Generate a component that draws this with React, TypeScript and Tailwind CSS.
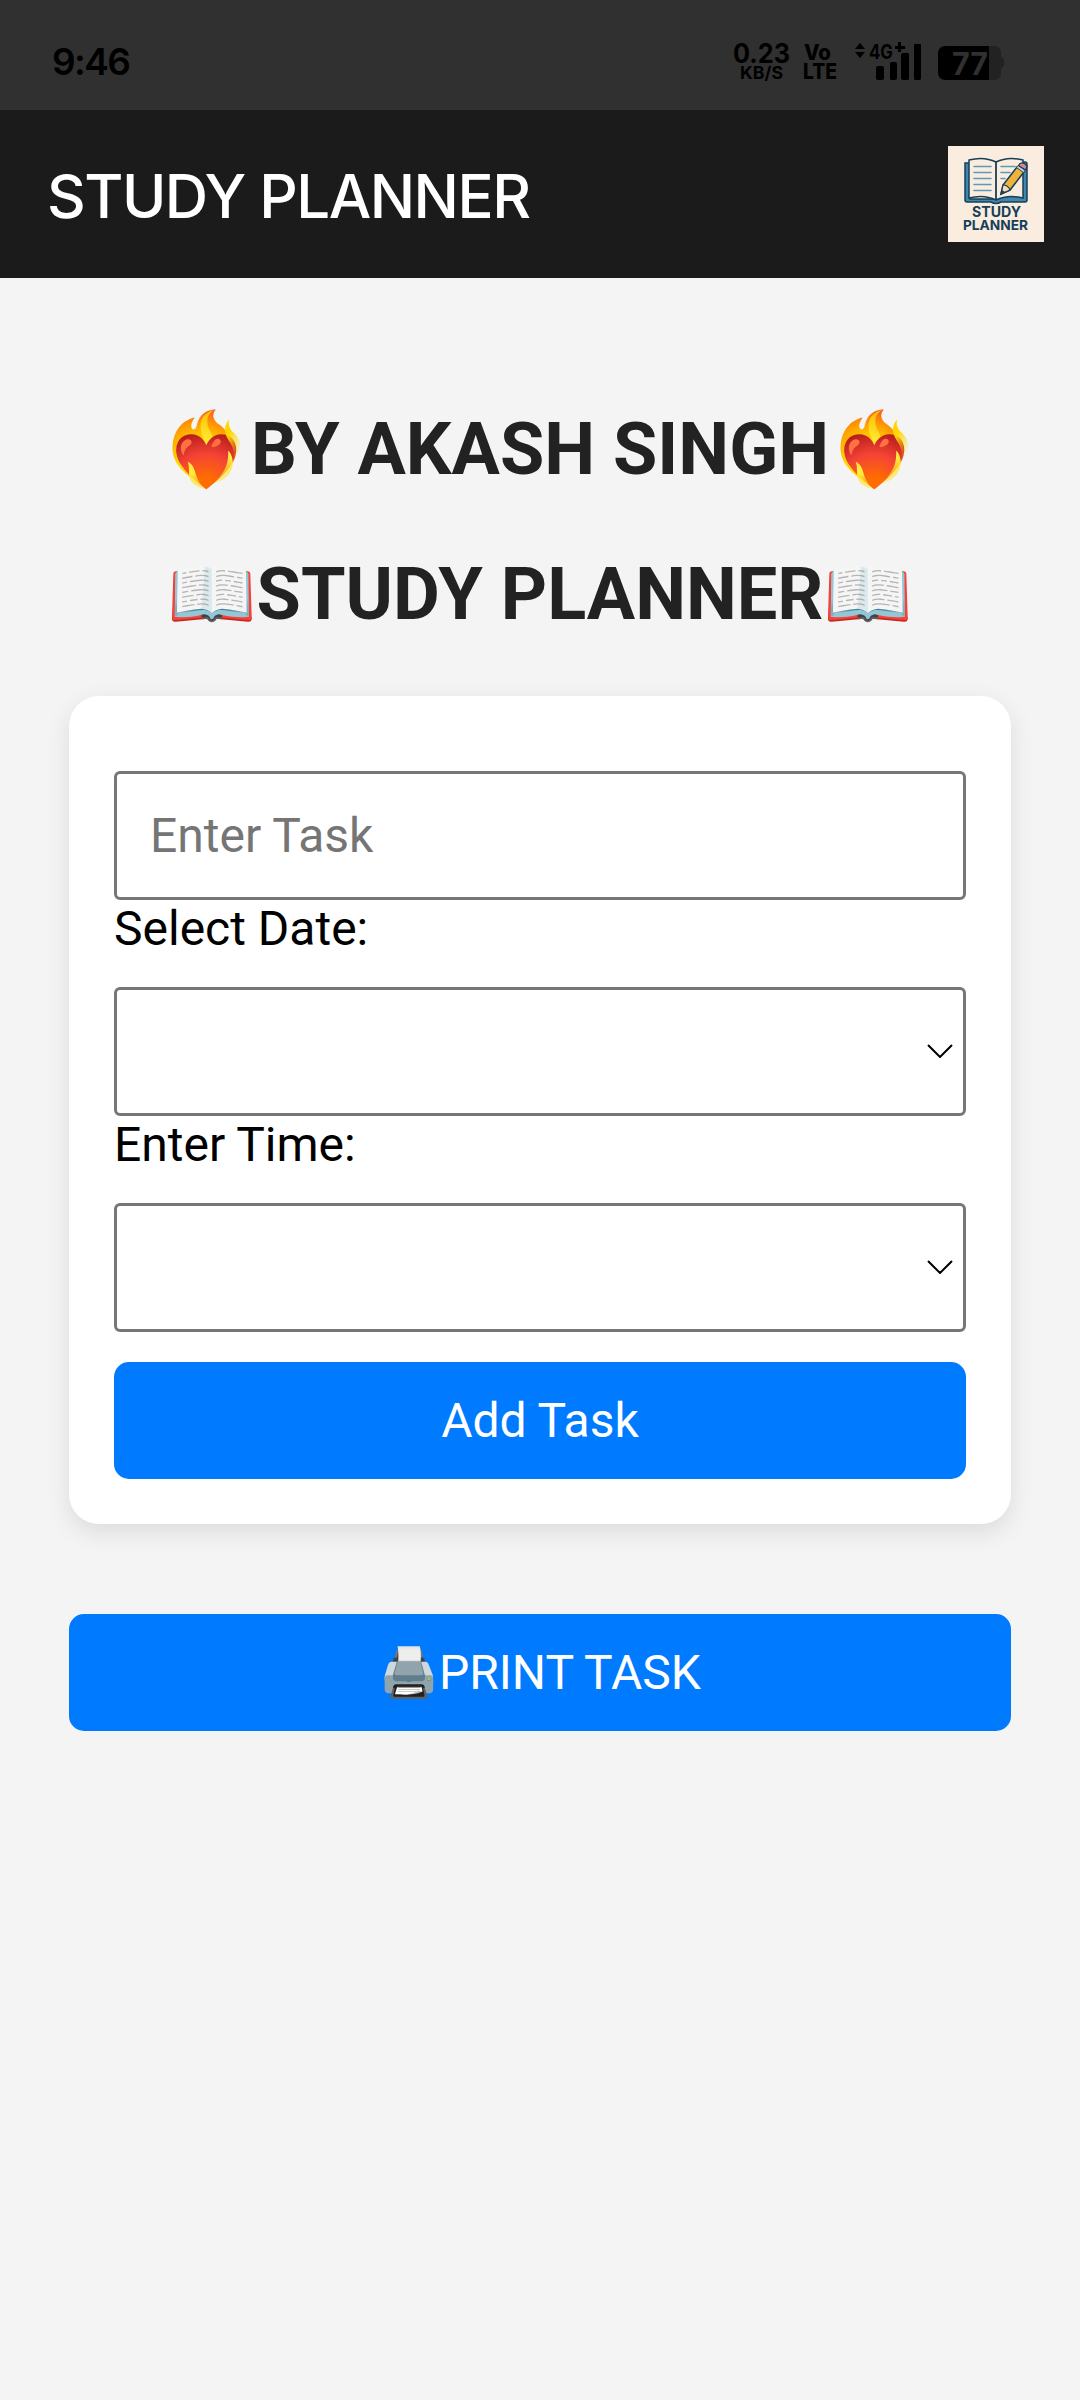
import React from "react";

const field =
  "h-[129px] w-full rounded-[6px] border-[3px] border-[#767676] bg-white";
const primary =
  "flex h-[117px] w-full items-center justify-center rounded-[15px] bg-[#007bff] text-[48px] leading-[56px] text-white";

function StatusBar() {
  return (
    <div className="flex h-[110px] items-start justify-between bg-[#303030] font-['Inter'] text-black">
      <div className="ml-[52px] mt-[40px] text-[37px] leading-[44px] font-semibold tracking-[-1.6px]">9:46</div>
      <div className="mr-[74px] mt-[42px] flex">
        <svg className="overflow-visible font-bold" width="56" height="40" viewBox="0 0 56 40">
          <text x="-2" y="21" fontSize="27" textLength="57" lengthAdjust="spacingAndGlyphs">0.23</text>
          <text x="5" y="37" fontSize="17.500" textLength="43" lengthAdjust="spacingAndGlyphs">KB/S</text>
        </svg>
        <svg className="ml-[14px] overflow-visible font-extrabold" width="34" height="40" viewBox="0 0 34 40">
          <text x="-1" y="18" fontSize="21" textLength="27" lengthAdjust="spacingAndGlyphs">Vo</text>
          <text x="-2" y="37" fontSize="21" textLength="34" lengthAdjust="spacingAndGlyphs">LTE</text>
        </svg>
        <svg className="ml-[16px] overflow-visible" width="68" height="40" viewBox="0 0 68 40">
          <path d="M0 7 5 1l5 6zM0 10h10L5 16z" />
          <path d="M23 24h4q2 0 2 2v10q0 2-2 2h-4q-2 0-2-2V26q0-2 2-2zM36 20h4q2 0 2 2v14q0 2-2 2h-4q-1 0-1-2V22q0-2 1-2zM48 11h5q1 0 1 2v23q0 2-1 2h-5q-2 0-2-2V13q0-2 2-2zM60 2h5q1 0 1 1v33q0 2-1 2h-5q-1 0-1-2V3q0-1 1-1z" />
          <text x="14" y="16.500" fontSize="20" fontWeight="700" textLength="24" lengthAdjust="spacingAndGlyphs">4G</text>
          <path d="M40 4h3V0h3v4h4v3h-4v3h-3V7h-3z" />
        </svg>
        <svg className="ml-[15px] overflow-visible" width="68" height="40" viewBox="0 0 68 40">
          <path d="M51 4h5q7 0 7 7v4q3 1 3 4v3q0 3-3 4v5q0 7-7 7h-5z" fill="#222" />
          <path d="M51 4H8Q0 4 0 12v18q0 8 8 8h43z" />
          <text x="14" y="32.500" fontSize="31" fontWeight="700" fill="#303030" textLength="36" lengthAdjust="spacingAndGlyphs">77</text>
        </svg>
      </div>
    </div>
  );
}

function Logo() {
  return (
    <svg width="96" height="96" viewBox="0 0 96 96" className="font-['Inter']">
      <rect width="96" height="96" fill="#faeddf" />
      <path d="M17 17h5v36h26V17h26v-1h3q2 0 2 2v36q0 2-2 2H53q-5 3-10 0H19q-2 0-2-2z" fill="#4087ad" stroke="#173f57" strokeWidth="1.500" />
      <path d="M21 14q15-4 27 2 12-6 27-2v38q-15-4-27 2-12-6-27-2z" fill="#faeddf" stroke="#173f57" strokeWidth="1.500" />
      <path d="M48 16v38" stroke="#173f57" strokeWidth="1.800" />
      <path d="M26 20.500h17M26 26.500h17M26 32.500h17M26 38.500h17M26 44.500h17M53 20.500h14M53 26.500h9M53 32.500h4" stroke="#5b9ab8" strokeWidth="1.600" strokeLinecap="round" />
      <path d="m53 48 2-9 14-18 7 5-14 18z" fill="#f0b33a" stroke="#173f57" strokeWidth="1.600" />
      <path d="m53 48 2-9q5 0 7 5z" fill="#f6d9b8" stroke="#173f57" strokeWidth="1.200" />
      <path d="m53 48 1-4 3 2z" fill="#173f57" />
      <path d="m68.500 21.500 1.700-2.200 7 5-1.700 2.200z" fill="#c9d6dc" stroke="#173f57" strokeWidth="0.800" />
      <path d="m70.500 19.500 1.500-2q4-2 7 3l-1.500 3.500z" fill="#e2848a" stroke="#173f57" strokeWidth="1.200" />
      <text x="24" y="71.200" textLength="49" lengthAdjust="spacingAndGlyphs" fontSize="14.200" fontWeight="700" fill="#173f57">STUDY</text>
      <text x="15" y="84.300" textLength="65" lengthAdjust="spacingAndGlyphs" fontSize="13.400" fontWeight="700" fill="#173f57">PLANNER</text>
    </svg>
  );
}

function Picker() {
  return (
    <div className={`${field} flex items-center justify-end pr-[10px] pb-[2px]`}>
      <svg width="26" height="14" viewBox="0 0 26 14" fill="none" stroke="#000" strokeWidth="2">
        <path d="M1 1l12 12L25 1" />
      </svg>
    </div>
  );
}

export default function App() {
  return (
    <div className="h-[2400px] w-[1080px] overflow-hidden bg-[#f4f4f4] font-['Roboto','Noto_Color_Emoji',sans-serif]">
      <StatusBar />
      <header className="flex h-[168px] items-center justify-between bg-[#1b1b1b] pl-[47px] pr-[36px]">
        <span className="pt-[4px] font-['Inter'] text-[60px] font-medium tracking-[-1.5px] text-white">STUDY PLANNER</span>
        <Logo />
      </header>
      <main className="px-[69px] pt-[130px]">
        <h1 className="text-center text-[72px] leading-[84px] font-bold whitespace-nowrap text-[#222]">❤️‍🔥BY AKASH SINGH❤️‍🔥</h1>
        <h1 className="mt-[61px] text-center text-[72px] leading-[84px] font-bold whitespace-nowrap text-[#222]">📖STUDY PLANNER📖</h1>
        <section className="mt-[59px] h-[828px] rounded-[30px] bg-white px-[45px] pt-[75px] text-[48px] leading-[56px] text-black shadow-[0_8px_24px_rgba(0,0,0,0.1)]">
          <input className={`${field} block px-[33px] placeholder:text-[#757575]`} placeholder="Enter Task" />
          <div className="mb-[30px] pt-px">Select Date:</div>
          <Picker />
          <div className="mb-[30px] pt-px">Enter Time:</div>
          <Picker />
          <button className={`${primary} mt-[30px]`}>Add Task</button>
        </section>
        <button className={`${primary} mt-[90px]`}>🖨️PRINT TASK</button>
      </main>
    </div>
  );
}
